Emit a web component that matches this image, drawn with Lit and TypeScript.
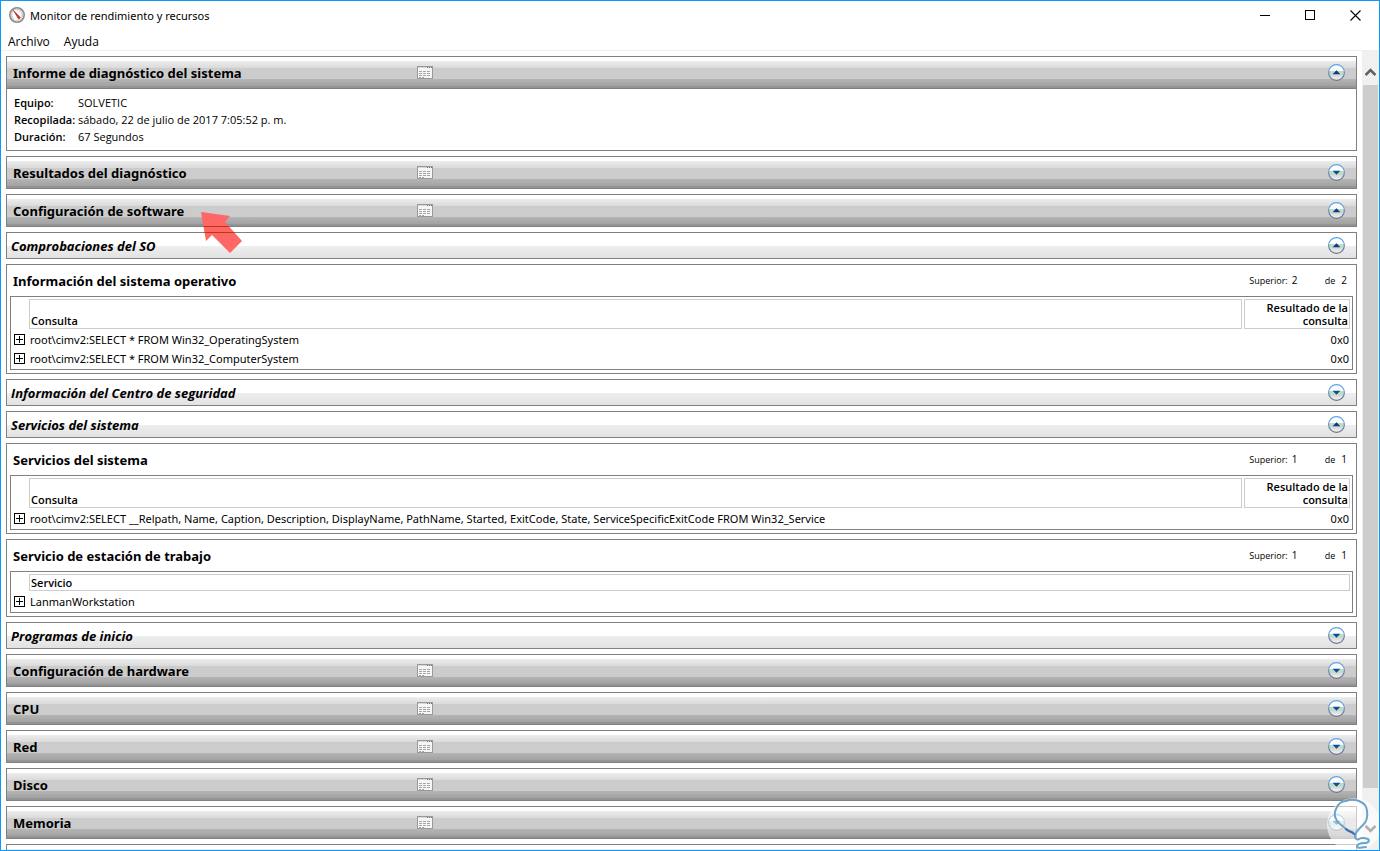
import { LitElement, html, svg, css, nothing, TemplateResult } from "lit";
import { customElement, state } from "lit/decorators.js";

interface QueryTable {
  id: string;
  title: string;
  columns: string[];
  rows: string[][];
}

interface SubSection {
  id: string;
  title: string;
  tables: QueryTable[];
}

interface Section {
  id: string;
  title: string;
  kind?: "summary" | "groups";
}

const SUMMARY: [string, string][] = [
  ["Equipo:", "SOLVETIC"],
  ["Recopilada:", "sábado, 22 de julio de 2017 7:05:52 p. m."],
  ["Duración:", "67 Segundos"],
];

const SECTIONS: Section[] = [
  { id: "informe", title: "Informe de diagnóstico del sistema", kind: "summary" },
  { id: "resultados", title: "Resultados del diagnóstico" },
  { id: "software", title: "Configuración de software", kind: "groups" },
  { id: "hardware", title: "Configuración de hardware" },
  { id: "cpu", title: "CPU" },
  { id: "red", title: "Red" },
  { id: "disco", title: "Disco" },
  { id: "memoria", title: "Memoria" },
];

const GROUPS: SubSection[] = [
  {
    id: "so",
    title: "Comprobaciones del SO",
    tables: [
      {
        id: "t-so",
        title: "Información del sistema operativo",
        columns: ["Consulta", "Resultado de la consulta"],
        rows: [
          ["root\\cimv2:SELECT * FROM Win32_OperatingSystem", "0x0"],
          ["root\\cimv2:SELECT * FROM Win32_ComputerSystem", "0x0"],
        ],
      },
    ],
  },
  { id: "seguridad", title: "Información del Centro de seguridad", tables: [] },
  {
    id: "servicios",
    title: "Servicios del sistema",
    tables: [
      {
        id: "t-servicios",
        title: "Servicios del sistema",
        columns: ["Consulta", "Resultado de la consulta"],
        rows: [
          [
            "root\\cimv2:SELECT __Relpath, Name, Caption, Description, DisplayName, PathName, Started, ExitCode, State, ServiceSpecificExitCode FROM Win32_Service",
            "0x0",
          ],
        ],
      },
      {
        id: "t-estacion",
        title: "Servicio de estación de trabajo",
        columns: ["Servicio"],
        rows: [["LanmanWorkstation"]],
      },
    ],
  },
  { id: "inicio", title: "Programas de inicio", tables: [] },
];

const gaugeIcon = html`<svg class="gauge" width="17" height="17" viewBox="0 0 17 17" aria-hidden="true">
  <circle cx="8" cy="8" r="7.2" fill="#f4f4f4" stroke="#8a8a8a" stroke-width="1.6" />
  <circle cx="8" cy="8" r="5.7" fill="#fff" stroke="#c4c4c4" stroke-width="0.8" />
  <path d="M4.5 11.5 A5 5 0 0 1 3.7 5.7 M8 3.1 A5 5 0 0 1 12.3 10.5" fill="none" stroke="#a9b4bc" stroke-width="1" stroke-dasharray="1 1" />
  <path d="M4.4 3.4 L11.4 10.6 L9.8 12.2 Z" fill="#c8381e" stroke="#c8381e" stroke-width="0.8" stroke-linejoin="round" />
</svg>`;

const reportIcon = html`<svg width="16" height="13" viewBox="0 0 16 13" shape-rendering="crispEdges" aria-hidden="true">
  <rect width="16" height="13" fill="#999" />
  <rect x="1" y="1" width="14" height="11" fill="#f6f6f6" />
  <rect x="1" y="1" width="14" height="1" fill="#d4d8dc" />
  <path d="M10 1h1v1h-1z M12 1h1v1h-1z M14 1h1v1h-1z" fill="#777" />
  <path d="M2 5h3v1h-3z M6 5h3v1h-3z M10 5h3v1h-3z M2 7h3v1h-3z M6 7h3v1h-3z M10 7h3v1h-3z M2 9h3v1h-3z M6 9h3v1h-3z M10 9h3v1h-3z M2 11h2v1h-2z M5 11h2v1h-2z" fill="#a6a6a6" />
</svg>`;

@customElement("toggle-disc")
export class ToggleDisc extends LitElement {
  static properties = { open: { type: Boolean }, label: { type: String } };
  declare open: boolean;
  declare label: string;

  static styles = css`
    :host { display: block; }
    .disc { display: block; width: 17px; height: 17px; padding: 0; border: 0; background: none; cursor: pointer; }
    .disc svg { display: block; }
  `;

  render() {
    const arrow = this.open
      ? svg`<path d="M4.6 10.2 H12.4 L8.5 6.2 Z" fill="#123a8c" />`
      : svg`<path d="M4.6 6.8 H12.4 L8.5 10.8 Z" fill="#0e4c9c" />`;
    return html`<button class="disc" aria-expanded=${this.open ? "true" : "false"} aria-label=${this.label}>
      <svg width="17" height="17" viewBox="0 0 17 17" aria-hidden="true">
        <defs>
          <linearGradient id="face" x1="0" y1="0" x2="0" y2="1">
            <stop offset="0" stop-color="#fff" />
            <stop offset="0.4" stop-color="#fafdfb" />
            <stop offset="0.42" stop-color="#b9dfc2" />
            <stop offset="0.62" stop-color="#c0dcc6" />
            <stop offset="0.64" stop-color="#d4d6d4" />
            <stop offset="1" stop-color="#f6f6f6" />
          </linearGradient>
          <linearGradient id="rim" x1="0" y1="0" x2="0" y2="1">
            <stop offset="0" stop-color="#5aa6ea" />
            <stop offset="0.6" stop-color="#5f86c0" />
            <stop offset="1" stop-color="#6c7286" />
          </linearGradient>
        </defs>
        <circle cx="8.5" cy="8.5" r="7.9" fill="url(#face)" stroke="url(#rim)" stroke-width="1.1" />
        ${arrow}
      </svg>
    </button>`;
  }
}

@customElement("app-root")
export class AppRoot extends LitElement {
  @state() private open: Record<string, boolean> = { informe: true, software: true, so: true, servicios: true };

  static styles = css`
    :host {
      display: block;
      height: 100vh;
      font-family: "Noto Sans", "Open Sans", sans-serif;
      font-size: 11px;
      line-height: 17px;
      color: #000;
    }
    .window {
      position: relative;
      display: flex;
      flex-direction: column;
      height: 100%;
      box-sizing: border-box;
      border: 1px solid #0d99f5;
      background: #fff;
      overflow: hidden;
    }
    h1, h2, h3, h4, dl, dd { margin: 0; }
    button, input { font: inherit; color: inherit; }
    .titlebar { display: flex; align-items: center; flex: none; height: 29px; padding: 0 1px 0 8px; }
    .gauge { flex: none; margin-right: 4px; }
    .title { flex: 1; font-size: 11px; font-weight: 400; }
    .caption { display: flex; align-items: center; justify-content: center; width: 45px; height: 29px; padding: 0; border: 0; background: none; }
    .menubar { display: flex; flex: none; height: 20px; border-bottom: 1px solid #f0f0f0; }
    .menu { padding: 2px 7px 0; border: 0; background: none; font-family: "Open Sans", sans-serif; font-size: 12px; line-height: 17px; }
    .body { display: flex; flex: 1; min-height: 0; }
    .report { display: flex; flex: 1; flex-direction: column; gap: 5px; min-width: 0; padding: 5px; overflow: hidden; }
    .panel { flex: none; box-sizing: border-box; border: 1px solid #808080; background: #fff; }
    .bar {
      position: relative;
      display: flex;
      align-items: center;
      height: 31px;
      background: linear-gradient(#fff 0 4px, #ededed 4px, #dadada 11px, #ccc 11px 22px, #b4b4b4 22px, #a2a2a2 29px, #949494 29px 31px);
    }
    .panel .body-rows { border-top: 1px solid #808080; }
    .bar-title { flex: 0 0 calc(30% + 5px); box-sizing: border-box; padding-left: 6px; font-size: 13px; line-height: 18px; font-weight: 700; }
    .icon-button { display: block; padding: 0; border: 0; background: none; }
    .icon-button svg { display: block; }
    .bar toggle-disc, .subbar toggle-disc { margin-left: auto; margin-right: 11px; }
    .subbar {
      display: flex;
      align-items: center;
      height: 25px;
      background: linear-gradient(#fff 0 13px, #eee 13px, #e2e2e2 25px);
    }
    .subtitle { padding-left: 4px; font-family: "Open Sans", sans-serif; font-size: 13px; line-height: 18px; font-weight: 700; font-style: italic; }
    .facts { display: grid; grid-template-columns: 64px 1fr; padding: 5px 7px 5px; font-family: "Open Sans", sans-serif; }
    .facts dt { font-weight: 600; white-space: nowrap; }
    .query { padding: 0 3px 3px; }
    .query-head { display: flex; align-items: center; height: 31px; padding: 0 6px 0 3px; font-family: "Open Sans", sans-serif; font-size: 9px; }
    .query-title { flex: 1; font-family: "Noto Sans", sans-serif; font-size: 13px; line-height: 18px; font-weight: 700; }
    .top-count { width: 33px; padding: 0; margin: 0 0 0 4px; border: 0; outline: 0; background: none; font-size: 10px; }
    .total { padding-left: 6px; font-size: 10px; }
    .grid { width: 100%; border: 1px solid #808080; border-spacing: 2px; table-layout: fixed; }
    .grid th, .grid td { padding: 0 1px; }
    .grid th { box-sizing: border-box; height: 17px; padding: 1px; border: 1px solid #ccc; text-align: left; vertical-align: bottom; font-family: "Open Sans", sans-serif; font-weight: 600; line-height: 13px; }
    .grid .corner { width: 14px; padding: 0; border: 0; }
    .grid .narrow { width: 106px; text-align: right; }
    .grid td { height: 17px; line-height: 17px; white-space: nowrap; }
    .grid .num { text-align: right; }
    .grid .plus-cell { padding: 0; }
    .plus { display: block; width: 11px; height: 11px; margin: 0 1px; padding: 0; border: 0; background: none; }
    .plus svg { display: block; }
    .pointer { position: absolute; z-index: 2; left: 193px; top: 16px; pointer-events: none; }
    .scroll { display: flex; flex: none; flex-direction: column; box-sizing: border-box; width: 17px; padding: 0 1px; background: #f0f0f0; }
    .scroll-step { flex: none; height: 34px; padding: 8px 0 0; border: 0; background: none; }
    .scroll-step.down { padding: 0 0 10px; }
    .scroll-step svg { display: block; margin: 0 auto; }
    .thumb { flex: 25; background: #cdcdcd; }
    .rest { flex: 1; }
    .badge { position: absolute; z-index: 3; right: -2px; bottom: 0; pointer-events: none; }
  `;

  private toggle(id: string) {
    this.open = { ...this.open, [id]: !this.open[id] };
  }

  private renderBar(s: Section): TemplateResult {
    const open = !!this.open[s.id];
    return html`<header class="bar">
      <h2 class="bar-title">${s.title}</h2>
      <button class="icon-button" aria-label="Menú de ${s.title}">${reportIcon}</button>
      <toggle-disc .open=${open} .label=${s.title} @click=${() => this.toggle(s.id)}></toggle-disc>
      ${s.id === "software"
        ? html`<svg class="pointer" width="44" height="44" viewBox="0 0 44 44" aria-hidden="true">
            <clipPath id="arrow"><path d="M1 1 L30 5 L25 11 L42 30 L30 42 L12 24 L6 30 Z" /></clipPath>
            <g clip-path="url(#arrow)">
              <rect width="44" height="44" fill="#ff6666" />
              <rect y="15" width="44" height="1" fill="#b83c0a" />
              <rect y="21" width="44" height="1" fill="#b83c0a" />
            </g>
          </svg>`
        : nothing}
    </header>`;
  }

  private renderTable(t: QueryTable): TemplateResult {
    return html`<section class="panel query">
      <header class="query-head">
        <h4 class="query-title" id=${t.id}>${t.title}</h4>
        <label for="${t.id}-n">Superior:</label>
        <input class="top-count" id="${t.id}-n" .value=${String(t.rows.length)} />
        <span>de</span><span class="total">${t.rows.length}</span>
      </header>
      <table class="grid" aria-labelledby=${t.id}>
        <thead>
          <tr>
            <td class="corner"></td>
            ${t.columns.map((c, i) => html`<th class=${i ? "narrow" : "wide"} scope="col">${c}</th>`)}
          </tr>
        </thead>
        <tbody>
          ${t.rows.map(
            (r) => html`<tr>
              <td class="plus-cell">
                <button class="plus" aria-label="Expandir">
                  <svg width="11" height="11" viewBox="0 0 11 11" shape-rendering="crispEdges" aria-hidden="true">
                    <path d="M0 0h11v11h-11z M1 1v9h9v-9z" fill="#000" fill-rule="evenodd" />
                    <path d="M2 5h7v1h-7z M5 2h1v7h-1z" fill="#000" />
                  </svg>
                </button>
              </td>
              ${r.map((v, i) => html`<td class=${i ? "num" : "text"}>${v}</td>`)}
            </tr>`
          )}
        </tbody>
      </table>
    </section>`;
  }

  private renderGroup(g: SubSection) {
    const open = !!this.open[g.id];
    return html`<section class="panel">
        <header class="subbar">
          <h3 class="subtitle">${g.title}</h3>
          <toggle-disc .open=${open} .label=${g.title} @click=${() => this.toggle(g.id)}></toggle-disc>
        </header>
      </section>
      ${open ? g.tables.map((t) => this.renderTable(t)) : nothing}`;
  }

  private renderSection(s: Section) {
    const open = !!this.open[s.id];
    return html`<section class="panel">
        ${this.renderBar(s)}
        ${open && s.kind === "summary"
          ? html`<div class="body-rows">
              <dl class="facts">${SUMMARY.map(([k, v]) => html`<dt>${k}</dt><dd>${v}</dd>`)}</dl>
            </div>`
          : nothing}
      </section>
      ${open && s.kind === "groups" ? GROUPS.map((g) => this.renderGroup(g)) : nothing}`;
  }

  render() {
    return html`<div class="window">
      <header class="titlebar">
        ${gaugeIcon}
        <h1 class="title">Monitor de rendimiento y recursos</h1>
        <button class="caption" aria-label="Minimizar">
          <svg width="11" height="11" shape-rendering="crispEdges"><path d="M0 5h10v1h-10z" /></svg>
        </button>
        <button class="caption" aria-label="Maximizar">
          <svg width="11" height="11" shape-rendering="crispEdges"><path d="M0 0h10v10h-10z M1 1v8h8v-8z" fill-rule="evenodd" /></svg>
        </button>
        <button class="caption" aria-label="Cerrar">
          <svg width="11" height="11"><path d="M0.5 0.5 L10.5 10.5 M10.5 0.5 L0.5 10.5" stroke="#000" stroke-width="1.1" /></svg>
        </button>
      </header>
      <nav class="menubar">
        <button class="menu">Archivo</button>
        <button class="menu">Ayuda</button>
      </nav>
      <div class="body">
        <main class="report">
          ${SECTIONS.map((s) => this.renderSection(s))}
          <section class="panel"><header class="bar"></header></section>
        </main>
        <div class="scroll">
          <button class="scroll-step" aria-label="Subir">
            <svg width="11" height="9" viewBox="0 0 11 9"><path d="M0.5 7 L5.5 2 L10.5 7" fill="none" stroke="#606060" stroke-width="2.6" /></svg>
          </button>
          <div class="thumb"></div>
          <div class="rest"></div>
          <button class="scroll-step down" aria-label="Bajar">
            <svg width="11" height="9" viewBox="0 0 11 9"><path d="M0.5 2 L5.5 7 L10.5 2" fill="none" stroke="#404040" stroke-width="2.6" /></svg>
          </button>
        </div>
      </div>
      <svg class="badge" width="54" height="54" viewBox="0 0 54 54" aria-hidden="true">
        <circle cx="27" cy="29" r="27" fill="#fff" fill-opacity="0.58" />
        <path d="M27 38 C25 35 22 36 19 33 C15 29 11 28 9 23 C7 19 8 15 9 13 C11 8 15 5 19 5 C24 3 29 4 32 5 C37 7 40 10 40 15 C41 21 40 25 36 29 C33 32 28 36 28 40 C28 43 30 44 32 43 C35 41 38 42 41 43 C43 45 41 47 38 47 C34 47 30 48 30 51 C31 53 35 51 39 51" fill="none" stroke="#6aa3cb" stroke-width="2" stroke-linecap="round" stroke-linejoin="round" />
        <path d="M27 38 C25 35 22 36 19 33" fill="none" stroke="#3f6fae" stroke-width="2" stroke-linecap="round" />
      </svg>
    </div>`;
  }
}
